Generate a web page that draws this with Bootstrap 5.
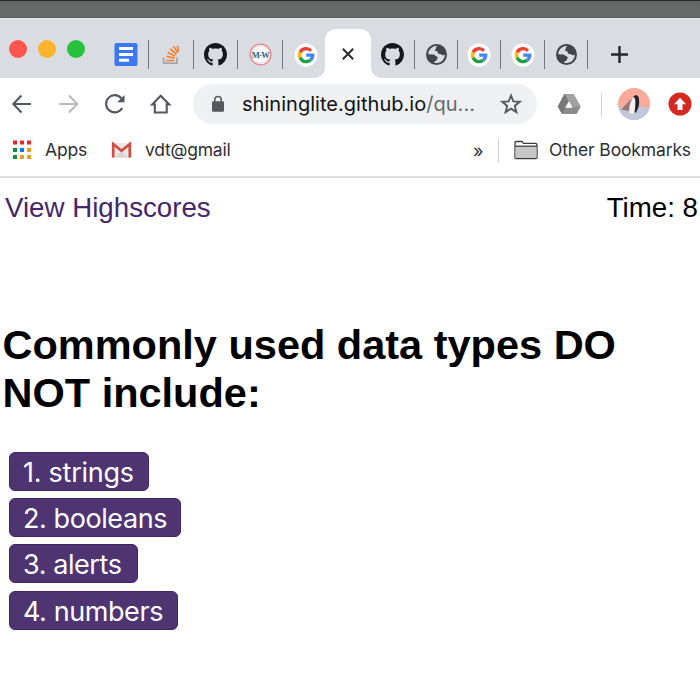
<!DOCTYPE html>
<html lang="en">
<head>
<meta charset="utf-8">
<meta name="viewport" content="width=device-width, initial-scale=1">
<title>Code Quiz</title>
<link href="https://cdn.jsdelivr.net/npm/bootstrap@5.3.0/dist/css/bootstrap.min.css" rel="stylesheet">
<style>
  body { width: 700px; height: 700px; overflow: hidden; background: #fff; color: #000; font-family: "Liberation Sans", Arial, sans-serif; }
  svg { display: block; flex: none; overflow: visible; }
  .desktop-strip { height: 18px; background: linear-gradient(#626766, #696e6d); border-top: 1px solid #29262a; border-bottom: 1px solid #555a5b; }
  .tab-strip { height: 60px; background: #d9dce1; border-top: 1px solid #eceef0; grid-template-columns: 104px 45px 45px 44px 45px 42px 46px 44px 43px 43px 44px 43px 63px; }
  .lights { gap: 11px; padding: 21px 0 0 9px; }
  .light { width: 18px; height: 18px; border-radius: 50%; }
  .site-tab { height: 29px; margin-top: 21px; border-right: 1px solid #74777b; }
  .no-rule { border-right-color: transparent; }
  .current-tab { position: relative; height: 49px; margin-top: 10px; background: #fff; border-radius: 11px 11px 0 0; }
  .current-tab::before, .current-tab::after { content: ""; position: absolute; bottom: 0; width: 10px; height: 10px; }
  .current-tab::before { left: -10px; background: radial-gradient(circle at 0 0, transparent 9.5px, #fff 10px); }
  .current-tab::after { right: -10px; background: radial-gradient(circle at 100% 0, transparent 9.5px, #fff 10px); }
  .browser-ui { height: 100px; border-bottom: 2px solid #dddde1; font-family: Inter, "Liberation Sans", sans-serif; color: #2d2f33; }
  .tool-row { height: 40px; margin-top: 6px; grid-template-columns: 46px 46px 46px 55px 344px 64px 1px 65px 33px; }
  .omnibox { height: 40px; border-radius: 20px; background: #eff0f2; padding: 0 15px 0 18px; }
  .address { width: 246px; margin-left: 17px; font-size: 20px; letter-spacing: .03px; color: #101214; white-space: nowrap; }
  .address span { color: #66696d; }
  .v-rule { width: 1px; height: 23px; background: #cdcfd2; }
  .bookmark-row { height: 52px; padding-left: 12px; font-size: 17.5px; white-space: nowrap; }
  .bm-apps { width: 99px; gap: 13px; letter-spacing: -.15px; }
  .bm-mail { width: 362px; gap: 13px; letter-spacing: -.22px; }
  .bm-other { gap: 11px; margin-left: 15px; letter-spacing: -.14px; }
  .more { width: 25px; font-size: 18px; }
  .quiz-head { height: 60px; padding: 14px 2px 0 5px; font-size: 27.7px; line-height: 32px; }
  .score-link { color: #432769; }
  .question { margin: 83px 0 0 2.5px; width: 660px; font-size: 41.5px; line-height: 48px; font-weight: 700; }
  .answers { gap: 7.2px; margin: 35px 0 0 9px; }
  .answer { height: 39px; padding: 2px 0 0 13px; text-align: left; border: 1px solid #3f2467; border-radius: 6px; background: #4e3572; color: #fff; font: 400 27px/36px Inter, "Liberation Sans", sans-serif; letter-spacing: -.42px; white-space: nowrap; }
  .answer:hover { background: #5c4183; color: #fff; }
  .w1 { width: 140px; letter-spacing: -.25px; } .w2 { width: 172px; } .w3 { width: 128.5px; } .w4 { width: 169px; }
</style>
</head>
<body>
<svg width="0" height="0" class="position-absolute" aria-hidden="true">
  <symbol id="google" viewBox="0 0 24 24">
    <circle cx="12" cy="12" r="11.5" fill="#fff"/>
    <path d="M18.1 6.7A8.2 8.2 0 0 0 4.7 8.3l2.8 2.2A4.9 4.9 0 0 1 15.8 9z" fill="#ea4335"/>
    <path d="M4.7 8.3a8.3 8.3 0 0 0 0 7.5l2.8-2.2a5 5 0 0 1 0-3.1z" fill="#fbbc05"/>
    <path d="M4.7 15.8a8.3 8.3 0 0 0 12.9 2.4l-2.7-2.1a5 5 0 0 1-7.4-2.5z" fill="#21a047"/>
    <path d="M12.2 10.5h8.1c.5 3.1-.4 5.8-2.7 7.7l-2.7-2.1a3.8 3.8 0 0 0 1.7-2.4h-4.4z" fill="#4285f4"/>
  </symbol>
  <symbol id="github" viewBox="0 0 16 16">
    <path fill="#14181b" d="M8 0C3.58 0 0 3.58 0 8c0 3.54 2.29 6.53 5.47 7.59.4.07.55-.17.55-.38 0-.19-.01-.82-.01-1.49-2.01.37-2.53-.49-2.69-.94-.09-.23-.48-.94-.82-1.13-.28-.15-.68-.52-.01-.53.63-.01 1.08.58 1.23.82.72 1.21 1.87.87 2.33.66.07-.52.28-.87.51-1.07-1.78-.2-3.64-.89-3.64-3.95 0-.87.31-1.59.82-2.15-.08-.2-.36-1.02.08-2.12 0 0 .67-.21 2.2.82.64-.18 1.32-.27 2-.27s1.36.09 2 .27c1.53-1.04 2.2-.82 2.2-.82.44 1.1.16 1.92.08 2.12.51.56.82 1.27.82 2.15 0 3.07-1.87 3.75-3.65 3.95.29.25.54.73.54 1.48 0 1.07-.01 1.93-.01 2.2 0 .21.15.46.55.38A8 8 0 0 0 16 8c0-4.42-3.58-8-8-8z"/>
  </symbol>
  <symbol id="globe" viewBox="0 0 20 20">
    <circle cx="10" cy="10" r="10" fill="#42464b"/>
    <path fill="#d9dce1" d="M10.8 2 9.4 3.5c-.2 1.1.1 1.6-.9 2.3.2 1.5 1.5 1 2.3 1.1.3 1.7.9 2.7 2.4 2.7 1.3-.1 1.8 1.1 2.8 1.2.9.1 1.5-.4 2-1A8.1 8.1 0 0 1 8 17.9c-.2-1 .1-1.6 1.2-1.8 1-.1.8-1.1 1.4-1.8.8-.8.7-2-.3-2.4-1.2-.5-2-1.9-3.4-2L2 9.8A8 8 0 0 1 10.8 2z"/>
  </symbol>
</svg>

<div class="desktop-strip"></div>
<nav class="tab-strip d-grid" aria-label="Tabs">
  <div class="lights d-flex">
    <span class="light" style="background:#fe554f"></span><span class="light" style="background:#fdb32b"></span><span class="light" style="background:#27c23b"></span>
  </div>
  <div class="site-tab d-flex align-items-center justify-content-center">
    <svg width="23" height="24" viewBox="0 0 23 24"><rect x="-.5" width="23" height="23" rx="2" fill="#3b79f2"/><path d="M4 5.500h14M4 11.500h14M4 17.300h10" stroke="#fff" stroke-width="2.900"/></svg>
  </div>
  <div class="site-tab d-flex align-items-center justify-content-center">
    <svg width="18" height="20" viewBox="0 0 18 20"><path d="M1.600 12.500v5.700h13.300v-5.700" fill="none" stroke="#a2a5a9" stroke-width="1.800"/><g stroke="#f38332" stroke-width="1.700"><path d="M4 15.500h8.500M4.400 11.400l8.200 1.800M5.700 7.400l7.400 3.500M8.200 4l6.300 5.200M11.500 1.200l4.400 6.500M15.300.6l1.300 5.800"/></g></svg>
  </div>
  <div class="site-tab d-flex align-items-center justify-content-center"><svg width="23" height="23"><use href="#github"/></svg></div>
  <div class="site-tab d-flex align-items-center justify-content-center">
    <svg width="23" height="23" viewBox="0 0 23 23"><circle cx="11.5" cy="11.5" r="10.4" fill="#f8fafc" stroke="#e58589" stroke-width="1.3"/><circle cx="11.5" cy="11.5" r="8.8" fill="none" stroke="#f3c2c5" stroke-width=".6"/><text x="11.5" y="14.700" text-anchor="middle" font-family="Liberation Serif, serif" font-size="8.500" font-weight="700" letter-spacing="-.7" fill="#315f88">M-W</text></svg>
  </div>
  <div class="site-tab no-rule d-flex align-items-center justify-content-center ps-1"><svg width="24" height="24"><use href="#google"/></svg></div>
  <div class="current-tab d-flex align-items-center justify-content-center">
    <svg width="12" height="12" viewBox="0 0 12 12"><path d="M.8.8l10.400 10.400M11.200.8.8 11.200" stroke="#292b2e" stroke-width="2"/></svg>
  </div>
  <div class="site-tab d-flex align-items-center justify-content-center"><svg width="23" height="23"><use href="#github"/></svg></div>
  <div class="site-tab d-flex align-items-center justify-content-center"><svg width="21" height="21"><use href="#globe"/></svg></div>
  <div class="site-tab d-flex align-items-center justify-content-center"><svg width="24" height="24"><use href="#google"/></svg></div>
  <div class="site-tab d-flex align-items-center justify-content-center"><svg width="24" height="24"><use href="#google"/></svg></div>
  <div class="site-tab d-flex align-items-center justify-content-center"><svg width="21" height="21"><use href="#globe"/></svg></div>
  <div class="site-tab no-rule d-flex align-items-center justify-content-center">
    <svg width="17" height="17" viewBox="0 0 17 17"><path d="M0 8.5h17M8.5 0v17" stroke="#25282b" stroke-width="2.4"/></svg>
  </div>
</nav>

<header class="browser-ui overflow-hidden">
  <div class="tool-row d-grid align-items-center">
    <svg width="46" height="24" viewBox="0 0 46 24"><path d="M31 12H13.5M21.5 3.5 13.3 12l8.2 8.5" fill="none" stroke="#53565b" stroke-width="2.1"/></svg>
    <svg width="46" height="24" viewBox="0 0 46 24"><path d="M13.3 12h18M23 3.5l8.3 8.5-8.3 8.5" fill="none" stroke="#b7b8ba" stroke-width="2"/></svg>
    <svg width="46" height="24" viewBox="0 0 46 24"><path d="M29.3 6.2A8.6 8.6 0 1 0 30.2 16" fill="none" stroke="#53565b" stroke-width="2.1"/><path d="M32.5 3v7.3h-7.3z" fill="#53565b"/></svg>
    <svg width="46" height="24" viewBox="0 0 46 24"><path d="M14.2 12.4 22.7 3.8l8.5 8.6h-2.5v8.1H16.8v-8.1z" fill="none" stroke="#53565b" stroke-width="2.1"/></svg>
    <div class="omnibox d-flex align-items-center">
      <svg width="14" height="18" viewBox="0 0 14 18"><rect x="1" y="6.2" width="12" height="10.6" rx="1.2" fill="#55585c"/><path d="M3.8 7V4.6a3.2 3.2 0 0 1 6.4 0V7" fill="none" stroke="#55585c" stroke-width="1.5"/></svg>
      <div class="address">shininglite.github.io<span>/qu...</span></div>
      <svg class="ms-auto" width="22" height="22" viewBox="0 0 22 22"><path d="M11 2.5 13.3 8.4l6.4.4-4.9 4.1 1.6 6.2-5.4-3.5-5.4 3.5 1.6-6.2-4.9-4.1 6.4-.4z" fill="none" stroke="#55585c" stroke-width="1.9"/></svg>
    </div>
    <svg width="64" height="24" viewBox="0 0 64 24"><path d="M27.4 2h9l7.3 12.5-4 7.5H25.1l-4.3-7.5z" fill="#8b8b8b"/><path d="M27.4 2h9l7.3 12.5h-9.1z" fill="#a1a1a1"/><path d="m27.4 2 4.4 7.5L25.1 22l-4.3-7.5z" fill="#787878"/><path d="m31.9 9.2 3.8 6.5h-7.6z" fill="#fff"/></svg>
    <span class="v-rule"></span>
    <svg width="65" height="34" viewBox="0 0 65 34"><clipPath id="face"><circle cx="32" cy="17" r="16"/></clipPath><g clip-path="url(#face)"><path d="M0 0h65v34H0z" fill="#faa99a"/><path d="M13 20.5L32 19l18 2v13H13z" fill="#c2c8db"/><path d="M19 22.5l9-9.5 3-.5-2 12z" fill="#97787a"/><path d="M27.5 26.5c-1-5.5 0-10.5 3.5-15.5h3.5l.5 9-3 6.5z" fill="#f4f0ee"/><path d="M31.3 9.8c1-1.8 4.2-2.5 5.2 0 1.2 5 .8 10.5-1.7 14.2l-1 2-1.3-1c.8-4.5 1-8.5.7-12.500-.4-1.400-1-2-1.900-2.700z" fill="#202429"/></g></svg>
    <svg width="24" height="24" viewBox="0 0 24 24"><circle cx="13" cy="12" r="11.5" fill="#d42821"/><path d="M13 5.7l6 6.5h-3.5V18h-5v-5.8H7z" fill="#fff"/></svg>
  </div>
  <div class="bookmark-row d-flex align-items-center">
    <div class="bm-apps d-flex align-items-center">
      <svg width="20" height="20" viewBox="0 0 20 20"><path d="M1 .5h4v4H1zM8 .5h4v4H8zM15 .5h4v4h-4z" fill="#e92727"/><path d="M1 8h4v4H1zM1 15h4v4H1z" fill="#168a3d"/><path d="M8 8h4v4H8z" fill="#1a78ef"/><path d="M15 8h4v4h-4zM8 15h4v4H8zM15 15h4v4h-4z" fill="#f49b16"/></svg>
      <span>Apps</span>
    </div>
    <div class="bm-mail d-flex align-items-center">
      <svg width="21" height="16" viewBox="0 0 21 16"><path d="M1 1h19v14.5H1z" fill="#e7e7e7"/><path d="M4 15.5 10.5 9l6.5 6.5z" fill="#d6d6d6"/><path d="M2.2 15.5V2l8.3 6.7L18.8 2v13.5" fill="none" stroke="#d54b3d" stroke-width="2.7"/></svg>
      <span>vdt@gmail</span>
    </div>
    <span class="more">»</span>
    <span class="v-rule"></span>
    <div class="bm-other d-flex align-items-center">
      <svg width="24" height="20" viewBox="0 0 24 20"><path d="M1 17.5V2.8Q1 1.5 2.3 1.5h5.1q1 0 1.5 1l.5.8h12q1.6 0 1.6 1.6v12.6q0 1-1 1H2q-1 0-1-1z" fill="#fff" stroke="#393b3e" stroke-width="1.3"/><path d="M1.5 6.4h21V18h-21z" fill="#c7c7c7"/><path d="M1 6.2h22" stroke="#393b3e" stroke-width="1.3"/></svg>
      <span>Other Bookmarks</span>
    </div>
  </div>
</header>

<main>
  <div class="quiz-head d-flex justify-content-between">
    <a class="score-link text-decoration-none" href="#">View Highscores</a>
    <span>Time: 8</span>
  </div>
  <h1 class="question">Commonly used data types DO NOT include:</h1>
  <div class="answers d-flex flex-column align-items-start">
    <button class="btn answer w1">1. strings</button>
    <button class="btn answer w2">2. booleans</button>
    <button class="btn answer w3">3. alerts</button>
    <button class="btn answer w4">4. numbers</button>
  </div>
</main>
<script src="https://cdn.jsdelivr.net/npm/bootstrap@5.3.0/dist/js/bootstrap.bundle.min.js"></script>
</body>
</html>
